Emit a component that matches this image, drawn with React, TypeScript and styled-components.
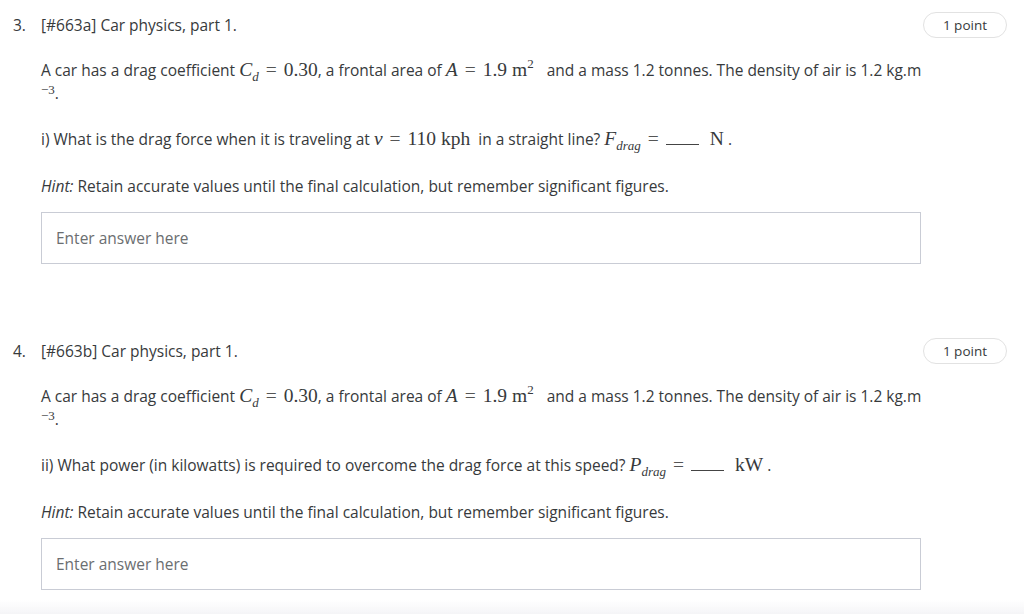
import styled, { createGlobalStyle } from 'styled-components'

const GlobalStyle = createGlobalStyle`
    html, body {
        margin: 0;
        padding: 0;
        background: #ffffff;
        overflow: hidden;
    }
    body {
        font-family: "Open Sans", "Noto Sans", sans-serif;
        color: #373a3c;
    }
`;

const Page = styled.div`
    padding: 12px 17px 0 13px;
    height: 614px;
    box-sizing: border-box;
`;

const Question = styled.section`
    display: grid;
    grid-template-columns: 28px 880px 1fr;
    margin-bottom: 74px;
`;

const Number = styled.div`
    font-size: 15.5px;
    line-height: 26px;
`;

const Content = styled.div`
    display: flex;
    flex-direction: column;
`;

const Title = styled.h3`
    margin: 0;
    font-size: 15.5px;
    font-weight: 400;
    line-height: 26px;
`;

const Badge = styled.div`
    justify-self: end;
    align-self: start;
    height: 26px;
    box-sizing: border-box;
    padding: 0 19px;
    border: 1px solid #e2e2e2;
    border-radius: 13px;
    font-size: 13.5px;
    line-height: 24px;
    white-space: nowrap;
`;

const Para = styled.p<{ $top: number }>`
    margin: ${p => p.$top}px 0 0;
    font-size: 15.5px;
    line-height: 23px;
    white-space: nowrap;
`;

const Math = styled.span<{ $after?: number }>`
    font-family: "Liberation Serif", "DejaVu Serif", serif;
    font-size: 19.5px;
    line-height: 0;
    white-space: nowrap;
    margin-right: ${p => p.$after ?? 0}px;
`;

const Var = styled.i`
    font-style: italic;
`;

const Sub = styled.sub`
    font-size: 13px;
    font-style: italic;
    vertical-align: -5px;
    line-height: 0;
`;

const Sup = styled.sup`
    font-size: 13px;
    vertical-align: 8px;
    line-height: 0;
`;

const Eq = styled.span`
    margin: 0 7px;
    color: #555;
`;

const Blank = styled.span`
    display: inline-block;
    width: 33px;
    border-bottom: 1px solid #444;
    margin-right: 11px;
`;

const Exp = styled.span`
    font-family: "Liberation Serif", "DejaVu Serif", serif;
    font-size: 13px;
    vertical-align: 5px;
    line-height: 0;
`;

const Input = styled.input`
    margin-top: 14px;
    height: 52px;
    box-sizing: border-box;
    width: 100%;
    padding: 0 14px;
    border: 1px solid #c9ccd5;
    border-radius: 0;
    font-family: "Open Sans", "Noto Sans", sans-serif;
    font-size: 15.5px;
    color: #373a3c;
    outline: none;
    &::placeholder {
        color: #6b6e70;
    }
`;

const Shade = styled.div`
    position: fixed;
    left: 0;
    right: 0;
    bottom: 0;
    height: 14px;
    background: linear-gradient(to bottom, rgba(245, 245, 247, 0), rgba(245, 245, 247, 1));
`;

const Intro = () => (
    <Para $top={21}>
        A car has a drag coefficient{' '}
        <Math><Var>C</Var><Sub>d</Sub><Eq>=</Eq>0.30</Math>, a frontal area of{' '}
        <Math $after={5}><Var>A</Var><Eq>=</Eq>1.9 m<Sup>2</Sup></Math>
        &nbsp;&nbsp;and a mass 1.2 tonnes. The density of air is 1.2 kg.m
        <br />
        <Exp>−3</Exp>.
    </Para>
);

const Hint = () => (
    <Para $top={24}>
        <i>Hint:</i> Retain accurate values until the final calculation, but remember significant figures.
    </Para>
);

const App = () => {
    return (
        <Page>
            <GlobalStyle />
            <Question>
                <Number>3.</Number>
                <Content>
                    <Title>[#663a] Car physics, part 1.</Title>
                    <Intro />
                    <Para $top={23}>
                        i) What is the drag force when it is traveling at{' '}
                        <Math><Var>v</Var><Eq>=</Eq>110 kph</Math>&nbsp; in a straight line?{' '}
                        <Math><Var>F</Var><Sub>drag</Sub><Eq>=</Eq><Blank />N</Math> .
                    </Para>
                    <Hint />
                    <Input placeholder="Enter answer here" />
                </Content>
                <Badge>1 point</Badge>
            </Question>
            <Question>
                <Number>4.</Number>
                <Content>
                    <Title>[#663b] Car physics, part 1.</Title>
                    <Intro />
                    <Para $top={23}>
                        ii) What power (in kilowatts) is required to overcome the drag force at this speed?{' '}
                        <Math><Var>P</Var><Sub>drag</Sub><Eq>=</Eq><Blank />kW</Math> .
                    </Para>
                    <Hint />
                    <Input placeholder="Enter answer here" />
                </Content>
                <Badge>1 point</Badge>
            </Question>
            <Shade />
        </Page>
    )
}

export default App
